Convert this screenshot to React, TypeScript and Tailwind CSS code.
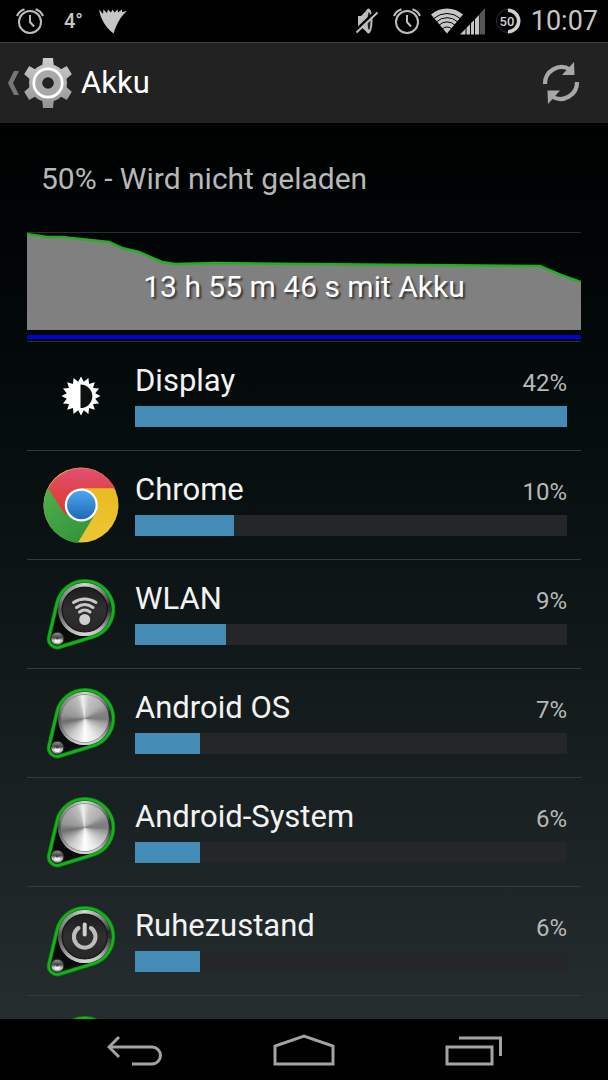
import type { ReactNode } from 'react'

type Stop = [number, number]
type Usage = { name: string; percent: number; fill: number; icon: ReactNode }

// brushed metal: [angle, grey level], clockwise from the right
const METAL: Stop[] = [
  [0, 125], [15, 165], [40, 205], [65, 235], [90, 255], [108, 225], [130, 200], [155, 150], [172, 110],
  [190, 150], [225, 170], [250, 190], [264, 240], [284, 195], [320, 175], [345, 130], [360, 125],
]
const RING: Stop[] = [
  [0, 50], [20, 100], [55, 190], [90, 215], [130, 175], [160, 110], [180, 80],
  [205, 130], [240, 160], [270, 215], [300, 160], [330, 100], [350, 40], [360, 50],
]

function level(stops: Stop[], angle: number) {
  const i = Math.max(1, stops.findIndex(s => s[0] >= angle))
  const [a0, g0] = stops[i - 1]
  const [a1, g1] = stops[i]
  return Math.round(g0 + ((g1 - g0) * (angle - a0)) / (a1 - a0))
}

function Disc({ cx, cy, r, stops }: { cx: number; cy: number; r: number; stops: Stop[] }) {
  const step = 4
  return (
    <g>
      <circle cx={cx} cy={cy} r={r - 1} fill="#aaa" />
      {Array.from({ length: 360 / step }, (_, i) => {
        const a = (i * step * Math.PI) / 180
        const b = ((i * step + step * 2) * Math.PI) / 180
        const g = level(stops, i * step + step / 2)
        return (
          <path
            key={i}
            d={`M${cx} ${cy}L${cx + r * Math.cos(a)} ${cy + r * Math.sin(a)}A${r} ${r} 0 0 1 ${cx + r * Math.cos(b)} ${cy + r * Math.sin(b)}Z`}
            fill={`rgb(${g},${g},${g})`}
          />
        )
      })}
    </g>
  )
}

const DIAL_OUTLINE = 'M6 60.9L14 27.1A28.500 28.500 0 1 1 50 60.8L16.800 71A8.500 8.500 0 0 1 6 60.9Z'

function Dial({ children, dark = false }: { children?: ReactNode; dark?: boolean }) {
  return (
    <svg viewBox="0 0 76 76" className="size-[76px]" aria-hidden="true">
      <defs>
        <linearGradient id="face" x1="0" y1="0" x2="0" y2="1">
          <stop offset="0" stopColor="#1c1c1c" />
          <stop offset="0.5" stopColor="#303030" />
          <stop offset="1" stopColor="#262626" />
        </linearGradient>
        <linearGradient id="pin" x1="0" y1="0" x2="0" y2="1">
          <stop offset="0" stopColor="#9a9a9a" />
          <stop offset="0.4" stopColor="#4a4a4a" />
          <stop offset="0.65" stopColor="#c8c8c8" />
          <stop offset="1" stopColor="#8a8a8a" />
        </linearGradient>
      </defs>
      <path d={DIAL_OUTLINE} fill="#0a0c0c" stroke="#0d7a12" strokeWidth="4" />
      <path d={DIAL_OUTLINE} fill="none" stroke="#13b31a" strokeWidth="2.6" />
      <Disc cx={41.7} cy={33.5} r={26.5} stops={RING} />
      {dark ? (
        <circle cx="41.7" cy="33.5" r="22.5" fill="url(#face)" stroke="#141414" strokeWidth="1.2" />
      ) : (
        <>
          <circle cx="41.7" cy="33.5" r="24.2" fill="#777" />
          <Disc cx={41.7} cy={33.5} r={23.5} stops={METAL} />
        </>
      )}
      <circle cx="14.3" cy="62.7" r="6.5" fill="url(#pin)" stroke="#2a2a2a" />
      <ellipse cx="14.3" cy="65" rx="3" ry="2" fill="#fff" opacity="0.75" />
      <circle cx="14.3" cy="62" r="1.5" fill="#444" />
      {children}
    </svg>
  )
}

function WifiDial() {
  return (
    <Dial dark>
      <g fill="none" stroke="#c9c9c9" strokeWidth="3" strokeLinecap="round">
        <path d="M30.5 26.5Q41.7 19.5 53 26.5" />
        <path d="M33.5 31.5Q41.7 25.5 50 31.5" />
        <path d="M36.5 36Q41.7 32 47 36" />
      </g>
      <circle cx="41.7" cy="43.5" r="5.5" fill="#cfcfcf" />
    </Dial>
  )
}

function PowerDial() {
  return (
    <Dial dark>
      <path d="M35.5 25A10.8 10.8 0 1 0 47.9 25" fill="none" stroke="#bdbdbd" strokeWidth="4" strokeLinecap="round" />
      <path d="M41.7 21.5V31.5" stroke="#d0d0d0" strokeWidth="4" strokeLinecap="round" />
    </Dial>
  )
}

function BrightnessIcon() {
  const points = Array.from({ length: 32 }, (_, i) => {
    const r = i % 2 ? 14.5 : 19.5
    const a = (i * Math.PI) / 16 - Math.PI / 2
    return `${20 + r * Math.cos(a)},${20 + r * Math.sin(a)}`
  }).join(' ')
  return (
    <svg viewBox="0 0 40 40" className="size-10" aria-hidden="true">
      <polygon points={points} fill="#fff" />
      <path d="M19.5 8.5a11.8 11.8 0 0 1 0 23.6Z" fill="#0c1011" />
    </svg>
  )
}

function ChromeIcon() {
  return (
    <svg viewBox="0 0 76 76" className="size-[76px]" aria-hidden="true">
      <defs>
        <linearGradient id="red" x1="0" y1="0" x2="0" y2="1">
          <stop offset="0" stopColor="#e2507a" />
          <stop offset="0.5" stopColor="#e04448" />
          <stop offset="1" stopColor="#dc3c38" />
        </linearGradient>
        <linearGradient id="green" x1="0" y1="0" x2="1" y2="1">
          <stop offset="0" stopColor="#4fae4c" />
          <stop offset="1" stopColor="#2f8f38" />
        </linearGradient>
        <linearGradient id="yellow" x1="0" y1="0" x2="0" y2="1">
          <stop offset="0" stopColor="#e8b41e" />
          <stop offset="1" stopColor="#ecc832" />
        </linearGradient>
        <linearGradient id="blue" x1="0" y1="0" x2="0" y2="1">
          <stop offset="0" stopColor="#4fa5ec" />
          <stop offset="1" stopColor="#1c69b8" />
        </linearGradient>
      </defs>
      <circle cx="38" cy="38" r="37.5" fill="url(#yellow)" />
      <path d="M5.2 20.5L22 46L38 38L54 44L34.7 76A38 38 0 0 1 5.2 20.5Z" fill="url(#green)" />
      <path d="M5.2 21.3A38 38 0 0 1 72.2 21.3H38V38L22 47.5Z" fill="url(#red)" />
      <circle cx="38.3" cy="38" r="16.5" fill="#fff" />
      <circle cx="38.3" cy="38" r="14.3" fill="url(#blue)" />
    </svg>
  )
}

function AlarmIcon() {
  return (
    <svg viewBox="0 0 28 28" className="size-7" fill="none" stroke="#bdbdbd" strokeWidth="2" aria-hidden="true">
      <circle cx="14" cy="15" r="11" />
      <path d="M14 8V15L18 19.5" />
      <path d="M1 9Q3 4 8.5 2.2M27 9Q25 4 19.5 2.2" strokeWidth="2.2" />
    </svg>
  )
}

function LeafIcon() {
  return (
    <svg viewBox="0 0 28 26" className="h-[26px] w-7" fill="#c6c6c6" aria-hidden="true">
      <path d="M14.5 25.5C7 20 1.5 11 0 1.5L4 6L4.5 1.5L8 5L9 1.5L12 4.5L13.5 1.5L15.5 4.5L18.5 1.5L19 4.5L23 1.5L23 4L28 3C22 8 18 15 14.5 25.5Z" />
    </svg>
  )
}

function MutedIcon() {
  return (
    <svg viewBox="0 0 24 28" className="h-7 w-6" aria-hidden="true">
      <path d="M3 9H6L13 2V26L6 20H3Z" fill="#bdbdbd" />
      <ellipse cx="13.5" cy="14" rx="4" ry="12.5" fill="#bdbdbd" />
      <ellipse cx="14" cy="14" rx="1.5" ry="9" fill="#222" />
      <path d="M.5 23.5L21 4" stroke="#000" strokeWidth="2.5" />
      <path d="M1.5 25.5L22.5 5.5" stroke="#bdbdbd" strokeWidth="2" />
    </svg>
  )
}

function WifiSignalIcon() {
  return (
    <svg viewBox="0 0 54 28" className="h-7 w-[54px]" aria-hidden="true">
      <path d="M0 7.5A24 24 0 0 1 32 7.5L16 26.5Z" fill="#c6c6c6" />
      <g fill="none" stroke="#000" strokeWidth="1">
        <path d="M3 11.300A20 20 0 0 1 29 11.300" />
        <path d="M5.500 14.800A15.5 15.5 0 0 1 26.500 14.800" />
        <path d="M8 18.3A11 11 0 0 1 24 18.3" />
        <path d="M11 22.3A6.5 6.5 0 0 1 21 22.3" />
      </g>
      <path d="M29 27.5L48 8V27.5Z" fill="#c6c6c6" />
      <path d="M48.5 27.5V7L54 1V27.5Z" fill="#555" />
      <path d="M35 20V28M39.5 15V28M43.5 10V28" stroke="#000" strokeWidth="1" />
    </svg>
  )
}

function BatteryRing() {
  return (
    <svg viewBox="0 0 26 26" className="size-[26px]" role="img" aria-label="50">
      <circle cx="13" cy="13" r="11.5" fill="none" stroke="#333" />
      <path d="M13 2.3A10.7 10.7 0 0 1 13 23.7" fill="none" stroke="#d0d0d0" strokeWidth="3.6" />
      <text x="12" y="17.5" textAnchor="middle" fontSize="13" fontWeight="500" fill="#d0d0d0" stroke="#000" strokeWidth="2" paintOrder="stroke">50</text>
    </svg>
  )
}

function GearIcon() {
  return (
    <svg viewBox="0 0 50 52" className="h-[52px] w-[50px]" aria-hidden="true">
      <defs>
        <linearGradient id="gear" x1="0" y1="0" x2="0" y2="52" gradientUnits="userSpaceOnUse">
          <stop offset="0" stopColor="#cfcfcf" />
          <stop offset="1" stopColor="#929292" />
        </linearGradient>
      </defs>
      <g fill="url(#gear)">
        <circle cx="25" cy="26" r="19" />
        <path d="M20 1H30L31 11H19Z" />
        <path d="M20 51H30L31 41H19Z" />
        <path d="M1.2 17.3L6.2 8.9L15 14L9 24Z" />
        <path d="M48.8 17.3L43.8 8.9L35 14L41 24Z" />
        <path d="M1.2 34.7L6.2 43.1L15 38L9 28Z" />
        <path d="M48.8 34.7L43.8 43.1L35 38L41 28Z" />
      </g>
      <circle cx="25" cy="26" r="14.2" fill="#a8a8a8" stroke="#fff" strokeWidth="2.8" />
      <circle cx="25" cy="26" r="5.8" fill="#222" />
    </svg>
  )
}

function RefreshIcon() {
  return (
    <svg viewBox="0 0 38 42" className="h-[42px] w-[38px]" aria-hidden="true">
      <g fill="none" stroke="#a8a8a8" strokeWidth="4.2">
        <path d="M3 22A16.5 16.5 0 0 1 28 7.5" />
        <path d="M35 20A16.5 16.5 0 0 1 10 34.5" />
      </g>
      <path d="M32 0L32.5 13H20Z" fill="#a8a8a8" />
      <path d="M6 42L5.5 28.5H18Z" fill="#a8a8a8" />
    </svg>
  )
}

const USAGE: Usage[] = [
  { name: 'Display', percent: 42, fill: 100, icon: <BrightnessIcon /> },
  { name: 'Chrome', percent: 10, fill: 23, icon: <ChromeIcon /> },
  { name: 'WLAN', percent: 9, fill: 21, icon: <WifiDial /> },
  { name: 'Android OS', percent: 7, fill: 15, icon: <Dial /> },
  { name: 'Android-System', percent: 6, fill: 15, icon: <Dial /> },
  { name: 'Ruhezustand', percent: 6, fill: 15, icon: <PowerDial /> },
]

function StatusBar() {
  return (
    <div className="flex h-[42px] shrink-0 items-center justify-between bg-black pr-2.5 pl-4 text-[#c6c6c6]">
      <div className="flex items-center">
        <AlarmIcon />
        <span className="mr-4 ml-5 text-xl font-medium">4°</span>
        <LeafIcon />
      </div>
      <div className="flex items-center">
        <MutedIcon />
        <span className="mr-2.5 ml-3.5"><AlarmIcon /></span>
        <WifiSignalIcon />
        <span className="mx-2.5"><BatteryRing /></span>
        <span className="text-[27px]">10:07</span>
      </div>
    </div>
  )
}

const LEVEL_LINE = 'M0 1L20 4L35 4L82 9L95 15L112 19L135 29L148 31L190 30L277 31L513 33L534 42L554 49'

function HistoryChart() {
  return (
    <button type="button" className="relative block h-[110px] w-full border-y border-[#2a2e2e] text-left">
      <svg viewBox="0 0 554 108" preserveAspectRatio="none" className="block h-[108px] w-full" aria-hidden="true">
        <path d={`${LEVEL_LINE}V97H0Z`} fill="#808080" />
        <path d={LEVEL_LINE} fill="none" stroke="#22b022" strokeWidth="2.5" />
        <rect y="97" width="554" height="11" fill="#040606" />
        <rect y="102" width="554" height="4" fill="#0000d8" />
      </svg>
      <span className="absolute inset-x-0 top-0 text-center text-[30px] leading-[108px] text-white [text-shadow:2px_2px_2px_#0009]">
        13 h 55 m 46 s mit Akku
      </span>
    </button>
  )
}

function UsageRow({ name, percent, fill, icon }: Usage) {
  return (
    <li className="flex h-[109px] border-b border-[#343a3b] pr-3.5">
      <div className="flex w-[108px] shrink-0 items-center justify-center">{icon}</div>
      <div className="flex-1 pt-[19px]">
        <div className="flex h-[45px] items-baseline justify-between">
          <span className="text-[31px] leading-10 text-[#f3f3f3]">{name}</span>
          <span className="text-2xl text-[#b8b8b8]">{percent}%</span>
        </div>
        <div className="h-[21px] bg-[#252628]">
          <div className="h-full bg-[#448cb5]" style={{ width: `${fill}%` }} />
        </div>
      </div>
    </li>
  )
}

export default function App() {
  return (
    <div className="flex h-screen flex-col overflow-hidden bg-black font-[Roboto,sans-serif]">
      <StatusBar />
      <header className="flex h-[82px] shrink-0 items-center justify-between border-t border-b border-t-[#3c3c3c] border-b-black bg-[#222222] pr-7 pl-2">
        <button type="button" className="flex items-center">
          <svg viewBox="0 0 12 24" className="h-6 w-3" aria-hidden="true">
            <path d="M6 0H11L5 12L11 24H6L0 12Z" fill="#777" />
          </svg>
          <span className="ml-[3px]"><GearIcon /></span>
          <h1 className="ml-2 text-[31px] text-white">Akku</h1>
        </button>
        <button type="button" aria-label="Aktualisieren">
          <RefreshIcon />
        </button>
      </header>

      <main className="min-h-0 flex-1 overflow-hidden bg-linear-to-b from-[#000202] to-[#262d2f] px-[27px]">
        <p className="flex h-[108px] items-center px-3.5 text-[30px] text-[#b8b8b8]">50% - Wird nicht geladen</p>
        <HistoryChart />
        <ul>
          {USAGE.map(item => (
            <UsageRow key={item.name} {...item} />
          ))}
          <li className="flex h-[109px] w-[108px] items-center justify-center">
            <Dial />
          </li>
        </ul>
      </main>

      <nav className="flex h-[61px] shrink-0 bg-black px-[50px] pt-px">
        <button type="button" aria-label="Zurück" className="flex flex-1 items-center justify-center">
          <svg viewBox="0 0 56 32" className="h-8 w-14" fill="none" stroke="#a3a3a3" strokeWidth="3" aria-hidden="true">
            <path d="M12 3L2 13L12 23" />
            <path d="M2 13H45A8.5 8.5 0 0 1 45 30H25" />
          </svg>
        </button>
        <button type="button" aria-label="Startseite" className="flex flex-1 items-center justify-center">
          <svg viewBox="0 0 62 32" className="h-8 w-[62px]" fill="none" stroke="#a3a3a3" strokeWidth="3" aria-hidden="true">
            <path d="M2 30V12L31 2L60 12V30Z" />
          </svg>
        </button>
        <button type="button" aria-label="Letzte Apps" className="flex flex-1 items-center justify-center">
          <svg viewBox="0 0 58 32" className="h-8 w-[58px]" fill="none" stroke="#a3a3a3" strokeWidth="3" aria-hidden="true">
            <path d="M3 13H48V30H3Z" />
            <path d="M15 4H56.5V22" />
          </svg>
        </button>
      </nav>
    </div>
  )
}
